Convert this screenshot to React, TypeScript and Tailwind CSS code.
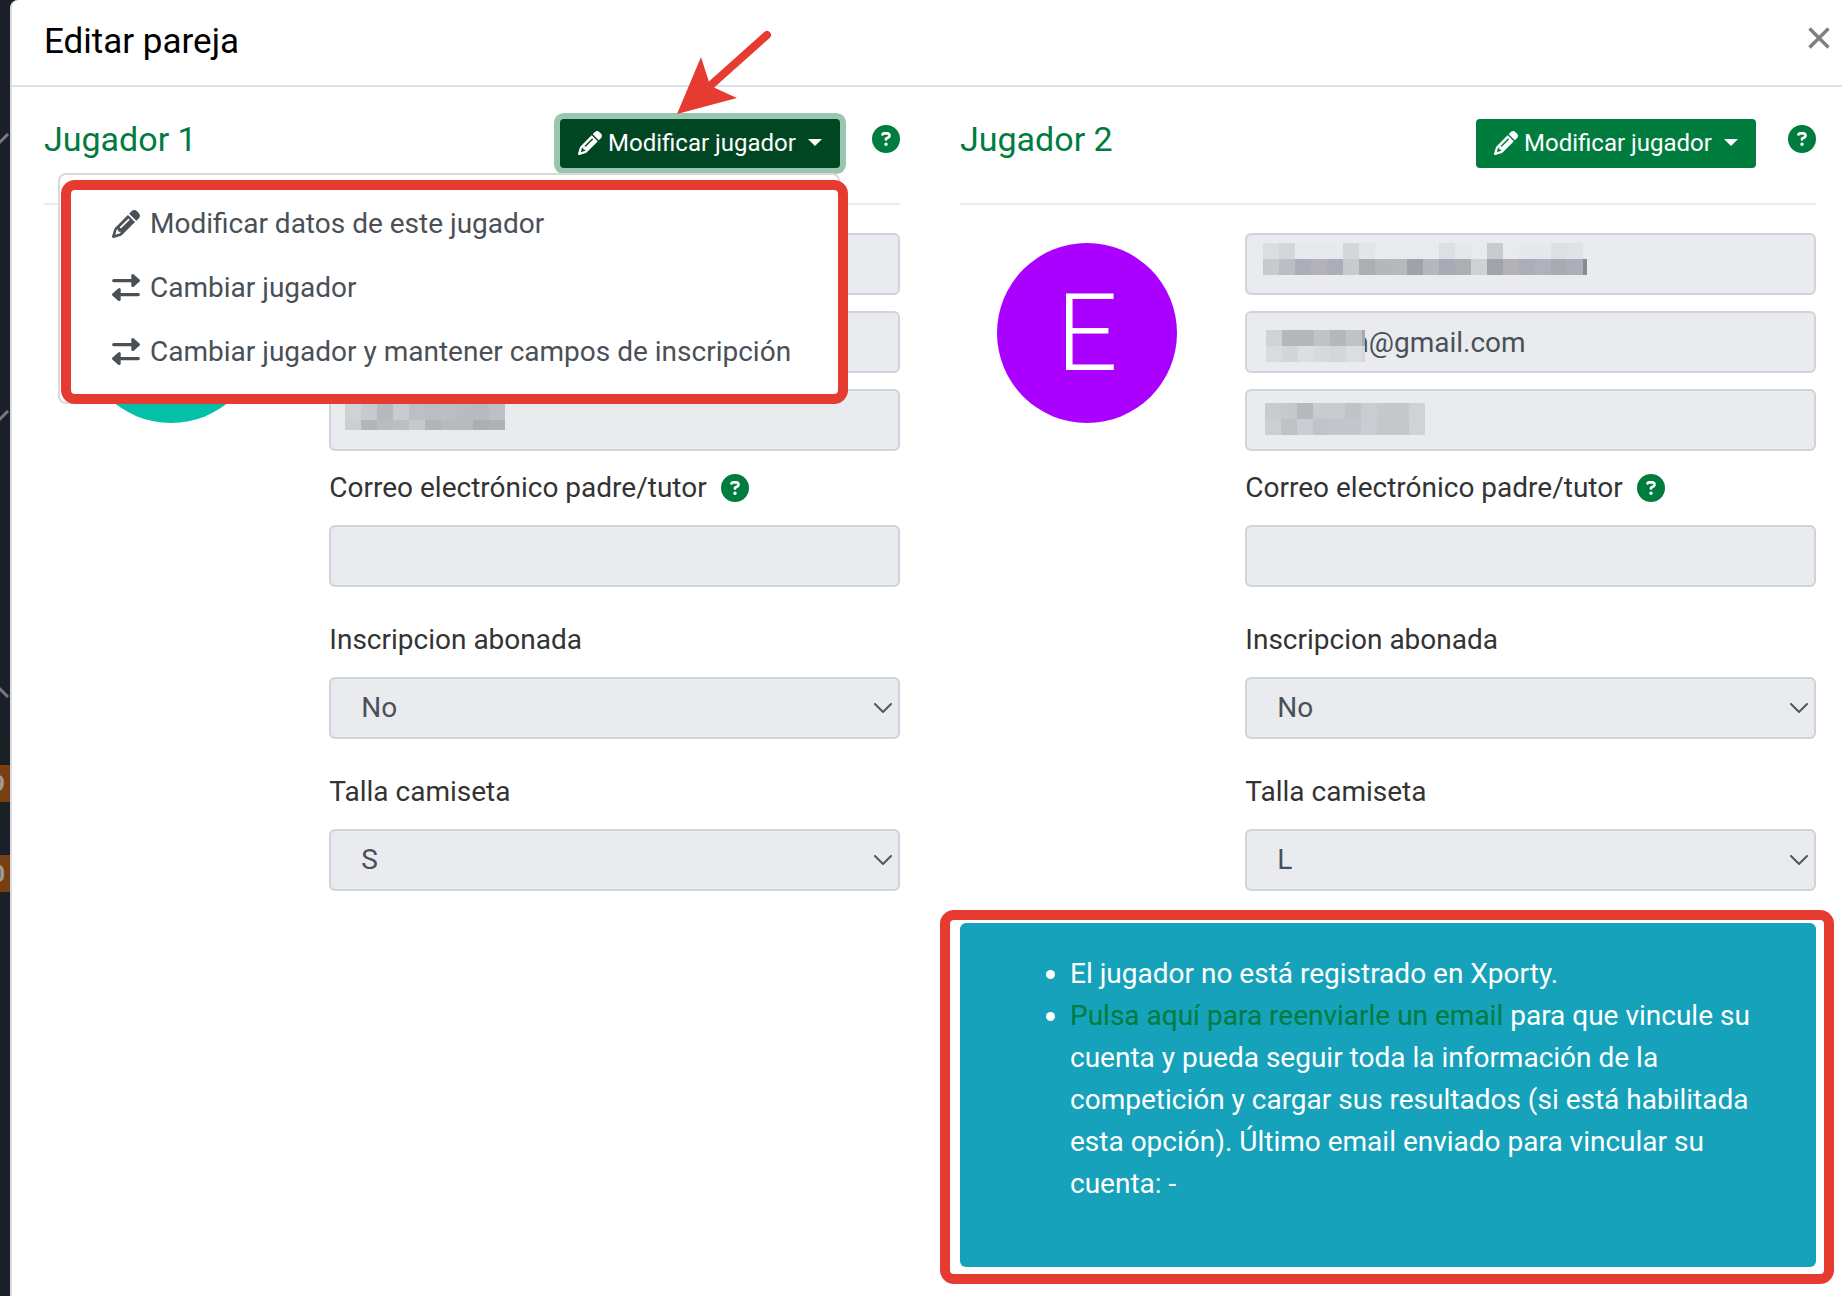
import { useId, type ReactNode } from "react";
import { FaCircleQuestion, FaPencil } from "react-icons/fa6";

const CELL = 16;

const NAME_MASK = [
  ["#dcdde0", "#d5d6db", "#e8e9ed", "#e8e9ed", "#e8e9ed", "#d5d6db", "#e4e5e9", "#e9eaee", "#e9eaee", "#e9eaee", "#e9eaee", "#dedfe3", "#e6e7eb", "#e9eaee", "#cacbd0", "#e9eaee", "#e7e8ec", "#e7e8ec", "#dedfe3", "#e1e2e6"],
  ["#c9cace", "#bdbec3", "#abaeb9", "#b2b2b8", "#abaeb8", "#c9cace", "#abaeb2", "#b6b7bb", "#b6b9bd", "#9fa2ab", "#b4b7bb", "#a8abb6", "#abaeb3", "#d0d1d5", "#a0a2ac", "#b2b2b7", "#abaeb9", "#afb2bc", "#a8aab4", "#acafb9", "#878a92"],
];

const EMAIL_MASK = [
  ["#d1d2d6", "#b4b7bb", "#b6b7bb", "#c1c2c7", "#b6b7bc", "#c1c2c7", "#a8aaae"],
  ["#dadbdf", "#d4d5d9", "#dddee2", "#d8d9dd", "#d5d6da", "#dcdde1", "#d5d6da"],
];

const PHONE_MASK = [
  ["#c8cbcf", "#c5c8cc", "#b6b9bd", "#cacbd0", "#cacbd0", "#c1c2c7", "#c9ccd0", "#c7c8cc", "#c5c8cc", "#d1d2d6"],
  ["#cdced2", "#c0c1c6", "#cccdd2", "#c2c3c8", "#c5c6cb", "#c5c6cb", "#cccdd2", "#c6c7cc", "#c6c7cc", "#d1d2d6"],
];

const PHONE_MASK_DARK = [
  ["#d1d2d6", "#c8c9ce", "#b8b9bd", "#cacbd0", "#bebfc4", "#bcbdc2", "#bdbec3", "#babbc0", "#b9babf", "#bebfc4"],
  ["#d1d2d6", "#c8c9ce", "#b8b9bd", "#cacbd0", "#bebfc4", "#bcbdc2", "#bdbec3", "#babbc0", "#b9babf", "#bebfc4"],
  ["#cdced2", "#b2b5b9", "#babbc0", "#bdbec3", "#c6c9cd", "#b1b4b8", "#b7babe", "#b7babe", "#abaeb2", "#aeb1b5"],
];

function Mask({ rows, width, height, className }: { rows: string[][]; width: number; height: number; className: string }) {
  return (
    <svg width={width} height={height} className={`pointer-events-none absolute ${className}`} shapeRendering="crispEdges" aria-hidden="true">
      {rows.map((row, y) =>
        row.map((fill, x) => <rect key={`${x}-${y}`} x={x * CELL} y={y * CELL} width={CELL} height={CELL} fill={fill} />),
      )}
    </svg>
  );
}

function SwapIcon() {
  return (
    <svg viewBox="0 0 28 28" className="size-[1em]" fill="currentColor" stroke="currentColor" strokeLinejoin="round" strokeLinecap="round" aria-hidden="true">
      <path d="M1.8 6.6H21M7 20.6H26.2" strokeWidth="3.4" />
      <path d="M20.8 1.6V11.6L26.4 6.6ZM7.2 15.6V25.6L1.6 20.6Z" strokeWidth="3" />
    </svg>
  );
}

const FIELD = "block h-[62px] w-full rounded-md border-2 border-[#ced4dc] bg-[#eaebef] text-[28px] text-[#495057]";

function TextField({ label, value = "", inset = "px-[22px]", children }: { label: string; value?: string; inset?: string; children?: ReactNode }) {
  return (
    <div className="relative">
      <input type="text" aria-label={label} disabled defaultValue={value} className={`${FIELD} ${inset}`} />
      {children}
    </div>
  );
}

function SelectField({ label, options, value }: { label: string; options: string[]; value: string }) {
  const id = useId();
  return (
    <div className="mt-8">
      <label htmlFor={id} className="mb-4 block text-[28px] leading-[42px] text-[#333333]">
        {label}
      </label>
      <div className="relative">
        <select id={id} disabled defaultValue={value} className={`${FIELD} appearance-none px-[30px] opacity-100`}>
          {options.map((o) => (
            <option key={o}>{o}</option>
          ))}
        </select>
        <svg viewBox="0 0 18 10" className="pointer-events-none absolute top-[26px] right-2 h-[10px] w-[18px]" fill="none" stroke="#50565d" strokeWidth="2" strokeLinecap="round" aria-hidden="true">
          <path d="M1 1l8 8 8-8" />
        </svg>
      </div>
    </div>
  );
}

function HelpButton() {
  return (
    <button type="button" aria-label="Ayuda" className="text-[28px] text-[#007c3e]">
      <FaCircleQuestion />
    </button>
  );
}

const MENU = [
  { icon: FaPencil, text: "Modificar datos de este jugador" },
  { icon: SwapIcon, text: "Cambiar jugador" },
  { icon: SwapIcon, text: "Cambiar jugador y mantener campos de inscripción" },
];

function ActionMenu() {
  return (
    <div className="absolute top-full right-0 z-10 mt-[5px] w-[782px] rounded-lg border-2 border-[#d9d9d9] bg-white pt-[17px] pb-[18px]">
      <ul>
        {MENU.map(({ icon: Icon, text }) => (
          <li key={text}>
            <button type="button" className="flex h-16 w-full items-center gap-[10px] pl-[52px] text-[28px] text-[#495057]">
              <Icon />
              {text}
            </button>
          </li>
        ))}
      </ul>
      <div className="pointer-events-none absolute top-[5px] -right-[10px] -bottom-[2px] left-[1px] rounded-[14px] border-10 border-[#e63b31]" />
    </div>
  );
}

function PointerArrow() {
  return (
    <svg viewBox="0 0 96 86" className="pointer-events-none absolute -top-[90px] left-[117px] h-[86px] w-[96px]" fill="#e63b31" aria-hidden="true">
      <path d="M90 6L34 56" stroke="#e63b31" strokeWidth="8" strokeLinecap="round" />
      <path d="M0 85L24 28L32 53L38 59L60 69Z" />
    </svg>
  );
}

function PlayerHeader({ title, open = false }: { title: string; open?: boolean }) {
  return (
    <div className="flex h-[86px] items-start border-b-2 border-[#ececee]">
      <h2 className="flex-1 text-[34px] leading-10 text-[#007c3e]">{title}</h2>
      <div className="relative">
        <button
          type="button"
          aria-expanded={open}
          className={`flex h-[49px] w-[280px] items-center rounded-[4px] pb-[2px] pl-[18px] text-2xl text-white ${open ? "bg-[#004623] ring-6 ring-[#99c6ae]" : "bg-[#007c3e]"}`}
        >
          <FaPencil />
          <span className="ml-[6px]">Modificar jugador</span>
          <svg viewBox="0 0 14 7" className="ml-3 h-[7px] w-[14px]" fill="currentColor" aria-hidden="true">
            <path d="M0 0h14L7 7z" />
          </svg>
        </button>
        {open && <ActionMenu />}
        {open && <PointerArrow />}
      </div>
      <div className="mt-[6px] ml-8 flex">
        <HelpButton />
      </div>
    </div>
  );
}

function GuardianField() {
  const id = useId();
  return (
    <div className="mt-4">
      <div className="mb-4 flex items-center gap-[14px]">
        <label htmlFor={id} className="text-[28px] leading-[42px] text-[#333333]">
          Correo electrónico padre/tutor
        </label>
        <HelpButton />
      </div>
      <input id={id} type="email" disabled className={`${FIELD} px-[22px]`} />
    </div>
  );
}

function Avatar({ letter, color }: { letter?: string; color: string }) {
  return (
    <div className={`mt-[10px] ml-[37px] flex size-[180px] items-center justify-center rounded-full text-[108px] leading-none font-light text-white ${color}`}>
      {letter}
    </div>
  );
}

function Backdrop() {
  return (
    <aside className="flex w-[10px] shrink-0 flex-col overflow-hidden bg-[#1b1f2a]" aria-hidden="true">
      <svg viewBox="0 0 10 737" className="h-[737px] w-[10px] shrink-0" fill="none" stroke="#777a7d" strokeWidth="3">
        <path d="M-2 144L8 134M-2 421L8 411M-2 687L8 697" />
      </svg>
      <div className="flex h-[91px] shrink-0 items-center bg-[#182023] pt-[2px]">
        <span className="flex h-[37px] w-[10px] items-center justify-end bg-[#783f13] pr-[5px] text-2xl font-bold text-[#a09a96]">9</span>
      </div>
      <div className="mt-[27px] flex h-[37px] w-[10px] shrink-0 items-center justify-end bg-[#783f13] pr-[5px] text-2xl font-bold text-[#a09a96]">0</div>
    </aside>
  );
}

export default function App() {
  return (
    <div className="flex min-h-screen overflow-hidden bg-[#1b1f2a] font-['Roboto',sans-serif]">
      <Backdrop />
      <main role="dialog" aria-labelledby="dialog-title" className="min-w-0 flex-1 rounded-tl-lg border-l-2 border-[#d9dce6] bg-white">
        <header className="flex h-[87px] items-center justify-between border-b-2 border-[#dee2e8] pr-3 pb-[2px] pl-8">
          <h1 id="dialog-title" className="text-[35px] leading-[42px] text-black">
            Editar pareja
          </h1>
          <button type="button" aria-label="Cerrar" className="mb-2">
            <svg viewBox="0 0 22 22" className="size-[22px]" stroke="#7f7f7f" strokeWidth="3.4" aria-hidden="true">
              <path d="M1.5 1.5l19 19M20.5 1.5L1.5 20.5" />
            </svg>
          </button>
        </header>

        <div className="grid grid-cols-2 gap-[60px] pt-8 pr-[26px] pb-7 pl-8">
          <section>
            <PlayerHeader title="Jugador 1" open />
            <div className="mt-7 grid grid-cols-[1fr_2fr]">
              <Avatar color="bg-[#05c0a8]" />
              <div>
                <div className="flex flex-col gap-4">
                  <TextField label="Nombre" />
                  <TextField label="Email" />
                  <TextField label="Teléfono">
                    <Mask rows={PHONE_MASK_DARK} width={160} height={42} className="top-[-1px] left-4" />
                  </TextField>
                </div>
                <GuardianField />
                <SelectField label="Inscripcion abonada" options={["No", "Sí"]} value="No" />
                <SelectField label="Talla camiseta" options={["S", "M", "L"]} value="S" />
              </div>
            </div>
          </section>

          <section>
            <PlayerHeader title="Jugador 2" />
            <div className="mt-7 grid grid-cols-[1fr_2fr]">
              <Avatar letter="E" color="bg-[#a900ff]" />
              <div>
                <div className="flex flex-col gap-4">
                  <TextField label="Nombre">
                    <Mask rows={NAME_MASK} width={324} height={32} className="top-[10px] left-[18px]" />
                  </TextField>
                  <TextField label="Email" value="n@gmail.com" inset="pl-[106px]">
                    <Mask rows={EMAIL_MASK} width={99} height={32} className="top-[19px] left-[21px]" />
                  </TextField>
                  <TextField label="Teléfono">
                    <Mask rows={PHONE_MASK} width={160} height={32} className="top-[14px] left-5" />
                  </TextField>
                </div>
                <GuardianField />
                <SelectField label="Inscripcion abonada" options={["No", "Sí"]} value="No" />
                <SelectField label="Talla camiseta" options={["S", "M", "L"]} value="L" />
              </div>
            </div>

            <div role="alert" className="relative mt-8 rounded-md bg-[#16a2ba] pt-[30px] pr-10 pb-[62px] pl-[110px] text-[28px] leading-[42px] text-white">
              <ul className="list-disc">
                <li>El jugador no está registrado en Xporty.</li>
                <li>
                  <a href="#reenviar" className="text-[#007c3e]">
                    Pulsa aquí para reenviarle un email
                  </a>{" "}
                  para que vincule su cuenta y pueda seguir toda la información de la competición y cargar sus resultados (si está habilitada esta opción). Último email enviado para vincular su cuenta: -
                </li>
              </ul>
              <div className="pointer-events-none absolute -top-[13px] -right-[18px] -bottom-[17px] -left-5 rounded-[14px] border-10 border-[#e63b31]" />
            </div>
          </section>
        </div>
      </main>
    </div>
  );
}
